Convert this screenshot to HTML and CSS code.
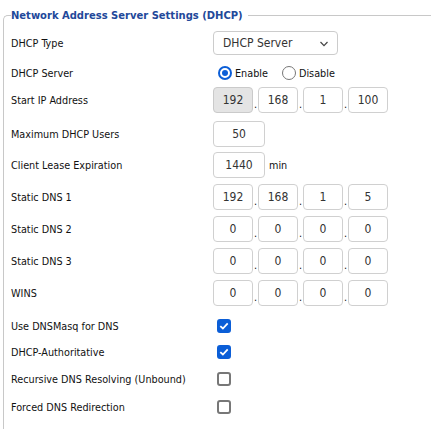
FILE: index.html
```html
<!DOCTYPE html>
<html>
<head>
<meta charset="utf-8">
<link rel="stylesheet" href="styles.css">
</head>
<body>
<fieldset class="box">
  <legend class="title">Network Address Server Settings (DHCP)</legend>
  <div class="row r-type">
    <div class="label">DHCP Type</div>
    <div class="field">
      <div class="select"><span>DHCP Server</span>
        <svg class="chev" width="10" height="6" viewBox="0 0 10 6"><path d="M1.5 1 L5 4.6 L8.5 1" fill="none" stroke="#444" stroke-width="1.2"/></svg>
      </div>
    </div>
  </div>
  <div class="row r-radio">
    <div class="label">DHCP Server</div>
    <div class="field radios">
      <span class="radio on"></span><span class="rtext">Enable</span>
      <span class="radio"></span><span class="rtext">Disable</span>
    </div>
  </div>
  <div class="row r-ip">
    <div class="label">Start IP Address</div>
    <div class="field ip">
      <span class="inp oct dis">192</span><span class="dot">.</span><span class="inp oct">168</span><span class="dot">.</span><span class="inp oct">1</span><span class="dot">.</span><span class="inp oct">100</span>
    </div>
  </div>
  <div class="row r-in r-max">
    <div class="label">Maximum DHCP Users</div>
    <div class="field"><span class="inp num">50</span></div>
  </div>
  <div class="row r-in r-lease">
    <div class="label">Client Lease Expiration</div>
    <div class="field"><span class="inp num">1440</span><span class="unit">min</span></div>
  </div>
  <div class="row r-in">
    <div class="label">Static DNS 1</div>
    <div class="field ip">
      <span class="inp oct">192</span><span class="dot">.</span><span class="inp oct">168</span><span class="dot">.</span><span class="inp oct">1</span><span class="dot">.</span><span class="inp oct">5</span>
    </div>
  </div>
  <div class="row r-in">
    <div class="label">Static DNS 2</div>
    <div class="field ip">
      <span class="inp oct">0</span><span class="dot">.</span><span class="inp oct">0</span><span class="dot">.</span><span class="inp oct">0</span><span class="dot">.</span><span class="inp oct">0</span>
    </div>
  </div>
  <div class="row r-in">
    <div class="label">Static DNS 3</div>
    <div class="field ip">
      <span class="inp oct">0</span><span class="dot">.</span><span class="inp oct">0</span><span class="dot">.</span><span class="inp oct">0</span><span class="dot">.</span><span class="inp oct">0</span>
    </div>
  </div>
  <div class="row r-in">
    <div class="label">WINS</div>
    <div class="field ip">
      <span class="inp oct">0</span><span class="dot">.</span><span class="inp oct">0</span><span class="dot">.</span><span class="inp oct">0</span><span class="dot">.</span><span class="inp oct">0</span>
    </div>
  </div>
  <div class="row r-cb c1">
    <div class="label">Use DNSMasq for DNS</div>
    <div class="field"><span class="cb on"><svg width="10" height="8" viewBox="0 0 10 8"><path d="M1.3 4.1 L3.9 6.5 L8.7 1.4" fill="none" stroke="#fff" stroke-width="1.8"/></svg></span></div>
  </div>
  <div class="row r-cb c2">
    <div class="label">DHCP-Authoritative</div>
    <div class="field"><span class="cb on"><svg width="10" height="8" viewBox="0 0 10 8"><path d="M1.3 4.1 L3.9 6.5 L8.7 1.4" fill="none" stroke="#fff" stroke-width="1.8"/></svg></span></div>
  </div>
  <div class="row r-cb c3">
    <div class="label">Recursive DNS Resolving (Unbound)</div>
    <div class="field"><span class="cb"></span></div>
  </div>
  <div class="row r-cb c4">
    <div class="label">Forced DNS Redirection</div>
    <div class="field"><span class="cb"></span></div>
  </div>
</fieldset>
</body>
</html>
```
FILE: styles.css
```css
html, body {
  margin: 0;
  padding: 0;
  background: #fff;
}
body {
  font-family: "DejaVu Sans Condensed", "DejaVu Sans", sans-serif;
  font-size: 10.75px;
  color: #111;
}
.box {
  margin: 9px 0 0 3px;
  padding: 0 0 30px 7px;
  border: 1px solid #c8c8c8;
  border-right: none;
  border-bottom: none;
  border-top-left-radius: 5px;
  min-height: 390px;
}
.title {
  padding: 0 5px 0 0;
  margin-left: 0;
  font-size: 11.1px;
  font-weight: bold;
  color: #22489a;
}
.row {
  display: flex;
  align-items: center;
}
.label {
  width: 202px;
  flex: none;
}
.field {
  display: flex;
  align-items: center;
}
.r-type { height: 24px; margin-top: 9px; }
.r-radio { height: 20px; margin-top: 8px; }
.r-ip { height: 26px; margin-top: 4px; }
.r-in { height: 26px; margin-top: 6px; }
.r-max { margin-top: 8px; }
.r-lease { margin-top: 5px; }
.r-cb { height: 14px; }
.c1 { margin-top: 13px; }
.c2 { margin-top: 12px; }
.c3 { margin-top: 13px; }
.c4 { margin-top: 14px; }
.select {
  box-sizing: border-box;
  width: 125px;
  height: 24px;
  border: 1px solid #cccccc;
  border-radius: 4px;
  display: flex;
  align-items: center;
  justify-content: space-between;
  padding: 0 8px 0 9px;
  font-size: 12px;
  color: #333;
}
.chev { margin-top: 1px; }
.radio {
  box-sizing: border-box;
  width: 14px;
  height: 14px;
  border-radius: 50%;
  border: 1px solid #777;
  margin-left: 6px;
  margin-right: 3px;
  position: relative;
}
.radio.on {
  border: 2px solid #0b5ed7;
  margin-left: 5px;
}
.radio.on::after {
  content: "";
  position: absolute;
  left: 2px; top: 2px;
  width: 6px; height: 6px;
  border-radius: 50%;
  background: #0b5ed7;
}
.rtext { margin-right: 8px; }
.inp {
  box-sizing: border-box;
  height: 26px;
  border: 1px solid #d0d0d0;
  border-radius: 4px;
  display: flex;
  align-items: center;
  justify-content: center;
  font-size: 12px;
  color: #333;
  background: #fff;
}
.oct { width: 40px; }
.num { width: 52px; }
.dis { background: #e4e4e4; border-color: #cacaca; }
.dot {
  width: 5px;
  text-align: center;
  align-self: flex-end;
  line-height: 12px;
  margin-bottom: 2px;
}
.unit { margin-left: 4px; }
.cb {
  box-sizing: border-box;
  width: 14px;
  height: 14px;
  border: 2px solid #777;
  border-radius: 3px;
  margin-left: 4px;
  display: flex;
  align-items: center;
  justify-content: center;
}
.cb.on {
  background: #0b5ed7;
  border-color: #0b5ed7;
}
```
